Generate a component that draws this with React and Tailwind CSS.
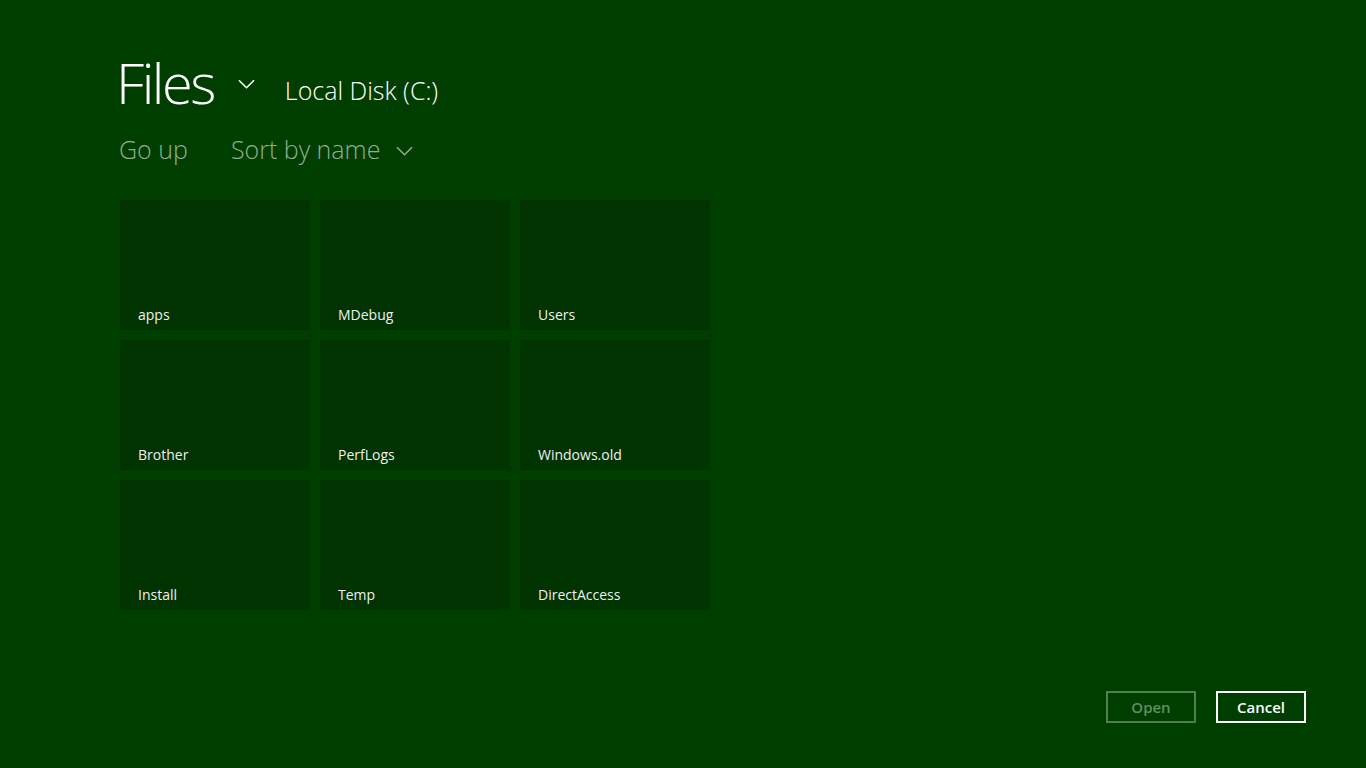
import React from "react";

const folders = [
  "apps",
  "MDebug",
  "Users",
  "Brother",
  "PerfLogs",
  "Windows.old",
  "Install",
  "Temp",
  "DirectAccess",
];

const Chevron = ({ className }) => (
  <svg viewBox="0 0 18 10" className={className} fill="none" stroke="currentColor" strokeWidth="1.6">
    <path d="M1 1l8 8 8-8" />
  </svg>
);

const App = () => {
  return (
    <div
      className="w-full h-screen bg-[#003e00] text-white flex flex-col overflow-hidden"
      style={{ fontFamily: '"Open Sans", "Noto Sans", sans-serif' }}
    >
      <div className="pl-[116px] pt-[47px] flex items-end">
        <h1 className="text-[56px] font-light leading-[70px] tracking-[-2.5px]">Files</h1>
        <Chevron className="w-[17px] h-[10px] ml-[24px] mb-[28px] text-white" />
        <span className="ml-[30px] mb-[11px] text-[25px] font-light leading-[32px]">Local Disk (C:)</span>
      </div>

      <div className="pl-[119px] mt-[16px] flex items-center text-[#8fb08f] text-[25px] font-light leading-[32px]">
        <span>Go up</span>
        <span className="ml-[43px]">Sort by name</span>
        <Chevron className="w-[17px] h-[10px] ml-[16px] mt-[3px]" />
      </div>

      <div className="pl-[120px] mt-[35px] grid grid-cols-[190px_190px_190px] auto-rows-[130px] gap-[10px]">
        {folders.map((name) => (
          <div key={name} className="bg-[#003300] flex items-end px-[18px] pb-[4px]">
            <span className="text-[14px] leading-[22px] text-[#f0f0f0]">{name}</span>
          </div>
        ))}
      </div>

      <div className="mt-auto mb-[45px] pr-[60px] flex justify-end gap-[20px]">
        <button className="w-[90px] h-[32px] border-2 border-[#4f7f4f] text-[#5f8f5f] text-[15px] font-semibold">
          Open
        </button>
        <button className="w-[90px] h-[32px] border-2 border-white text-white text-[15px] font-semibold">
          Cancel
        </button>
      </div>
    </div>
  );
};

export default App;
